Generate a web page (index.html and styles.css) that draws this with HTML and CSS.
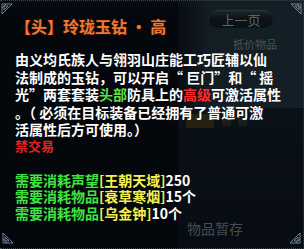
FILE: index.html
```html
<!DOCTYPE html>
<html lang="zh-CN">
<head>
<meta charset="utf-8">
<link rel="stylesheet" href="styles.css">
</head>
<body>
<div class="scene">
  <div class="under">
    <div class="panel-top"></div>
    <div class="panel-low"></div>
    <div class="btn-prev">上一页</div>
    <div class="lbl-price">抵价物品</div>
    <div class="slot-amber"></div>
    <div class="slot-a"></div>
    <div class="slot-b"></div>
    <div class="lbl-store">物品暂存</div>
  </div>
  <div class="tip">
    <svg class="corner tl" width="12" height="12" viewBox="0 0 12 12"><path d="M1 1 L11 1 L1 11 Z M3 3 L7 3 L3 7 Z M1 5 L5 1" fill="none" stroke="#6f8096" stroke-width="1"/></svg>
    <svg class="corner tr" width="12" height="12" viewBox="0 0 12 12"><path d="M11 1 L1 1 L11 11 Z M9 3 L5 3 L9 7 Z M11 5 L7 1" fill="none" stroke="#6f8096" stroke-width="1"/></svg>
    <svg class="corner bl" width="12" height="12" viewBox="0 0 12 12"><path d="M1 11 L11 11 L1 1 Z M3 9 L7 9 L3 5 Z M1 7 L5 11" fill="none" stroke="#6f8096" stroke-width="1"/></svg>
    <svg class="corner br" width="12" height="12" viewBox="0 0 12 12"><path d="M11 11 L1 11 L11 1 Z M9 9 L5 9 L9 5 Z M11 7 L7 11" fill="none" stroke="#6f8096" stroke-width="1"/></svg>

    <div class="title">【头】玲珑玉钻 · 高</div>
    <div class="desc">
      <div class="ln">由义均氏族人与翎羽山庄能工巧匠辅以仙</div>
      <div class="ln">法制成的玉钻，可以开启“ 巨门”和“ 摇</div>
      <div class="ln">光”两套套装<span class="g">头部</span>防具上的<span class="r">高级</span>可激活属性</div>
      <div class="ln">。（ 必须在目标装备已经拥有了普通可激</div>
      <div class="ln">活属性后方可使用。）</div>
    </div>
    <div class="notrade">禁交易</div>
    <div class="costs">
      <div class="cost">需要消耗声望<span class="y">[王朝天域]</span><span class="w">250</span></div>
      <div class="cost">需要消耗物品<span class="y">[衰草寒烟]</span><span class="w">15个</span></div>
      <div class="cost">需要消耗物品<span class="y">[乌金钟]</span><span class="w">10个</span></div>
    </div>
  </div>
</div>
</body>
</html>
```

FILE: styles.css
```css
* { box-sizing: border-box; }
html, body {
  margin: 0;
  padding: 0;
  background: #05080d;
}
.scene {
  position: relative;
  width: 304px;
  height: 249px;
  overflow: hidden;
  font-family: "Noto Sans CJK SC", "Noto Sans", sans-serif;
}
.under {
  position: absolute;
  inset: 0;
  background: linear-gradient(to bottom, #0b121b 0, #06090f 12px, #05080d 100%);
}
.panel-top {
  position: absolute;
  left: 178px;
  top: 0;
  width: 126px;
  height: 108px;
  background: linear-gradient(to right, rgba(30,44,54,0.2) 0, #1d2a33 30px, #1f2d37 100%);
}
.panel-low {
  position: absolute;
  left: 178px;
  top: 108px;
  width: 126px;
  height: 141px;
  background: linear-gradient(to bottom, #0f1720 0, #0b1119 100%);
}
.btn-prev {
  position: absolute;
  left: 209px;
  top: 10px;
  width: 64px;
  height: 18px;
  border-radius: 9px;
  background: linear-gradient(to bottom, #2c3840 0, #141b21 40%, #10161b 100%);
  border-top: 1px solid #3f4c56;
  color: #8c959d;
  font-size: 13px;
  line-height: 17px;
  text-align: center;
}
.lbl-price {
  position: absolute;
  left: 233px;
  top: 37px;
  color: #747c84;
  font-size: 11px;
  line-height: 14px;
}
.slot-amber {
  position: absolute;
  left: 186px;
  top: 114px;
  width: 28px;
  height: 14px;
  border-radius: 3px;
  background: #3a2f16;
}
.slot-a, .slot-b {
  position: absolute;
  top: 116px;
  width: 9px;
  height: 10px;
  border-radius: 2px;
  background: #2a2a22;
}
.slot-a { left: 222px; }
.slot-b { left: 238px; }
.lbl-store {
  position: absolute;
  left: 187px;
  top: 219px;
  color: #6b7279;
  font-size: 14px;
  line-height: 18px;
}
.tip {
  position: relative;
  width: 304px;
  height: 249px;
  padding: 15px 0 0 15px;
  border-top: 1px dotted #34475a;
  border-bottom: 1px dotted #34475a;
  border-right: 1px dotted #2a3a4a;
  background: rgba(2, 5, 10, 0.35);
}
.corner { position: absolute; display: block; }
.corner.tl { left: 1px; top: 2px; }
.corner.tr { right: 1px; top: 2px; }
.corner.bl { left: 2px; bottom: 4px; }
.corner.br { right: 2px; bottom: 4px; }
.title {
  color: #ec7834;
  font-size: 16px;
  font-weight: 700;
  line-height: 20px;
  text-shadow: 0 0 2px rgba(120, 40, 0, 0.8);
  white-space: nowrap;
}
.desc {
  margin-top: 15px;
  color: #ffffff;
  font-size: 14px;
  font-weight: 700;
  display: flex;
  flex-direction: column;
}
.ln {
  height: 17.5px;
  line-height: 17.5px;
  white-space: nowrap;
  display: flex;
}
.ln span { display: block; }
.g { color: #5ee04a; }
.r { color: #ff2a2a; }
.notrade {
  color: #e02424;
  font-size: 13px;
  font-weight: 700;
  line-height: 15px;
  margin-top: -1px;
}
.costs {
  margin-top: 19px;
  display: flex;
  flex-direction: column;
}
.cost {
  display: flex;
  height: 16.5px;
  color: #3ee53e;
  font-size: 14px;
  font-weight: 700;
  line-height: 16.5px;
  white-space: nowrap;
}
.cost span { display: block; }
.y { color: #f4f050; }
.w { color: #ffffff; }
```
